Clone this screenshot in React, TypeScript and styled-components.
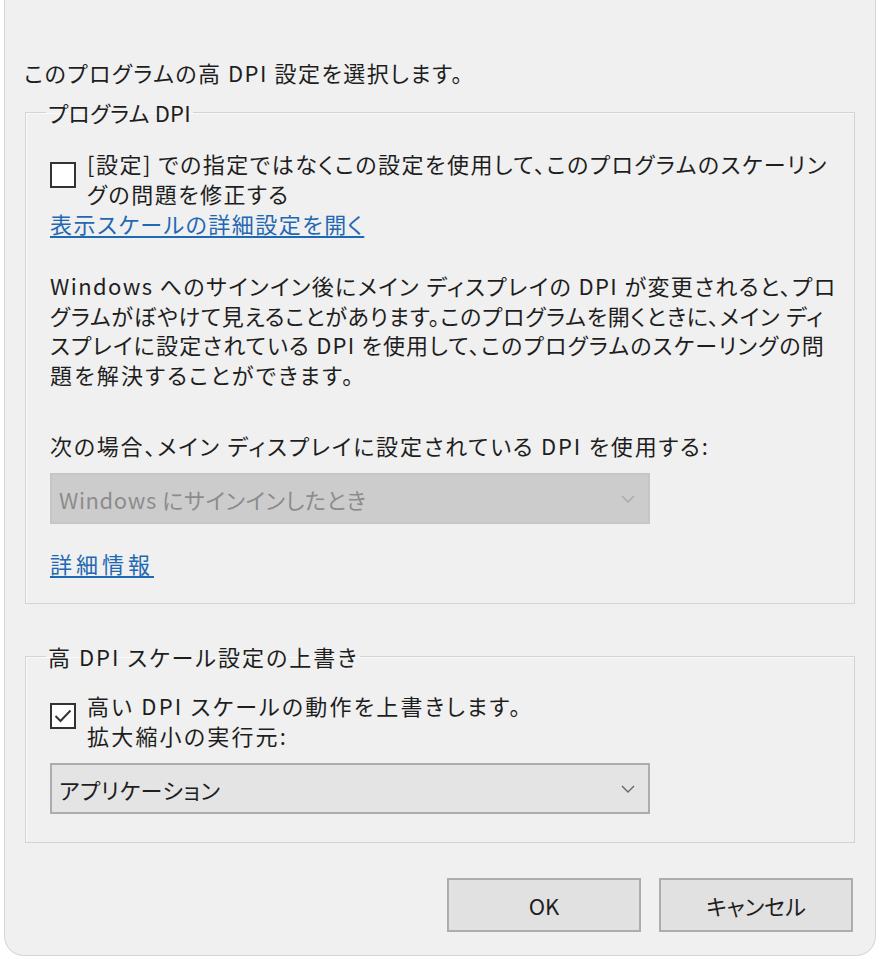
import styled, { createGlobalStyle } from "styled-components";

const GlobalStyle = createGlobalStyle`
    body {
        margin: 0;
        background: #fff;
        font-family: "Noto Sans CJK JP", "Noto Sans", sans-serif;
        color: #1e1e1e;
    }
`;

const Page = styled.div`
    padding: 0 14px 4px 4px;
`;

const Dialog = styled.div`
    background: #f0f0f0;
    border: 1px solid #d6d6d6;
    border-top: none;
    border-radius: 0 0 20px 20px;
    padding: 57px 20px 23px 20px;
    font-size: 22px;
    font-feature-settings: "palt";
    letter-spacing: 1.5px;
`;

const Title = styled.div`
    line-height: 30px;
    margin-left: -1px;
    white-space: nowrap;
`;

const Group = styled.fieldset<{ $top: number; $padTop: number; $padBottom: number }>`
    margin: ${p => p.$top}px 0 0;
    padding: ${p => p.$padTop}px 24px ${p => p.$padBottom}px;
    border: 1px solid #d3d3d3;
    box-shadow: inset 1px 1px 0 #fafafa;
    min-width: 0;
`;

const Legend = styled.legend<{ $track?: number }>`
    padding: 0 2px;
    margin-left: -4px;
    line-height: 30px;
    ${p => (p.$track !== undefined ? `letter-spacing: ${p.$track}px;` : "")}
`;

const CheckRow = styled.label`
    display: flex;
    align-items: flex-start;
    gap: 11px;
`;

const Box = styled.span<{ $offset: number }>`
    flex: none;
    width: 26px;
    height: 26px;
    box-sizing: border-box;
    margin-top: ${p => p.$offset}px;
    border: 2px solid #333;
    background: #fff;
    display: flex;
    align-items: center;
    justify-content: center;
`;

const Lines = styled.span<{ $track?: number }>`
    line-height: 30px;
    white-space: nowrap;
    ${p => (p.$track !== undefined ? `letter-spacing: ${p.$track}px;` : "")}
`;

const Link = styled.a<{ $top: number; $track?: number }>`
    display: block;
    width: max-content;
    margin-top: ${p => p.$top}px;
    line-height: 30px;
    color: #1f68b4;
    text-decoration: underline;
    text-underline-offset: 3px;
    ${p => (p.$track !== undefined ? `letter-spacing: ${p.$track}px;` : "")}
`;

const Para = styled.p`
    margin: 33px 0 0;
    line-height: 29.5px;
    white-space: nowrap;
`;

const ParaLine = styled.span<{ $track: number }>`
    display: block;
    letter-spacing: ${p => p.$track}px;
`;

const FieldLabel = styled.div`
    margin-top: 41px;
    line-height: 30px;
    white-space: nowrap;
    letter-spacing: 1.8px;
`;

const Select = styled.div<{ $disabled?: boolean; $top: number }>`
    width: 600px;
    height: 51px;
    box-sizing: border-box;
    margin-top: ${p => p.$top}px;
    padding: 0 13px 0 7px;
    display: flex;
    align-items: center;
    justify-content: space-between;
    letter-spacing: 0.6px;
    background: ${p => (p.$disabled ? "#cccccc" : "#e4e4e4")};
    border: 2px solid ${p => (p.$disabled ? "#c6c6c6" : "#adadad")};
    color: ${p => (p.$disabled ? "#8c8c8c" : "#1e1e1e")};
`;

const Buttons = styled.div`
    display: flex;
    justify-content: flex-end;
    gap: 18px;
    margin: 35px 2px 0 0;
`;

const Button = styled.button`
    width: 194px;
    height: 54px;
    background: #e1e1e1;
    border: 2px solid #adadad;
    font: inherit;
    color: #1e1e1e;
    padding: 0;
`;

const paragraph: [string, number][] = [
    ["Windows へのサインイン後にメイン ディスプレイの DPI が変更されると、プロ", 1.4],
    ["グラムがぼやけて見えることがあります。このプログラムを開くときに、メイン ディ", 0.8],
    ["スプレイに設定されている DPI を使用して、このプログラムのスケーリングの問", 1.2],
    ["題を解決することができます。", 2.2],
];

function Chevron({ color }: { color: string }) {
    return (
        <svg width="14" height="8" viewBox="0 0 14 8">
            <polyline points="1,1 7,7 13,1" fill="none" stroke={color} strokeWidth="1.4" />
        </svg>
    );
}

function Check() {
    return (
        <svg width="22" height="22" viewBox="0 0 22 22">
            <polyline points="3.5,11 8.5,16 18.5,5.5" fill="none" stroke="#333" strokeWidth="2" />
        </svg>
    );
}

export default function App() {
    return (
        <Page>
            <GlobalStyle />
            <Dialog>
                <Title>このプログラムの高 DPI 設定を選択します。</Title>

                <Group $top={10} $padTop={21} $padBottom={25}>
                    <Legend $track={0.2}>プログラム DPI</Legend>
                    <CheckRow>
                        <Box $offset={14} />
                        <Lines>
                            [設定] での指定ではなくこの設定を使用して、このプログラムのスケーリン
                            <br />
                            グの問題を修正する
                        </Lines>
                    </CheckRow>
                    <Link $top={0}>表示スケールの詳細設定を開く</Link>
                    <Para>
                        {paragraph.map(([text, track]) => (
                            <ParaLine key={text} $track={track}>{text}</ParaLine>
                        ))}
                    </Para>
                    <FieldLabel>次の場合、メイン ディスプレイに設定されている DPI を使用する:</FieldLabel>
                    <Select $disabled $top={13}>
                        <span>Windows にサインインしたとき</span>
                        <Chevron color="#a9a9a9" />
                    </Select>
                    <Link $top={24} $track={4}>詳細情報</Link>
                </Group>

                <Group $top={37} $padTop={19} $padBottom={28}>
                    <Legend $track={2}>高 DPI スケール設定の上書き</Legend>
                    <CheckRow>
                        <Box $offset={13}>
                            <Check />
                        </Box>
                        <Lines $track={2.2}>
                            高い DPI スケールの動作を上書きします。
                            <br />
                            拡大縮小の実行元:
                        </Lines>
                    </CheckRow>
                    <Select $top={13}>
                        <span>アプリケーション</span>
                        <Chevron color="#666" />
                    </Select>
                </Group>

                <Buttons>
                    <Button>OK</Button>
                    <Button>キャンセル</Button>
                </Buttons>
            </Dialog>
        </Page>
    );
}
